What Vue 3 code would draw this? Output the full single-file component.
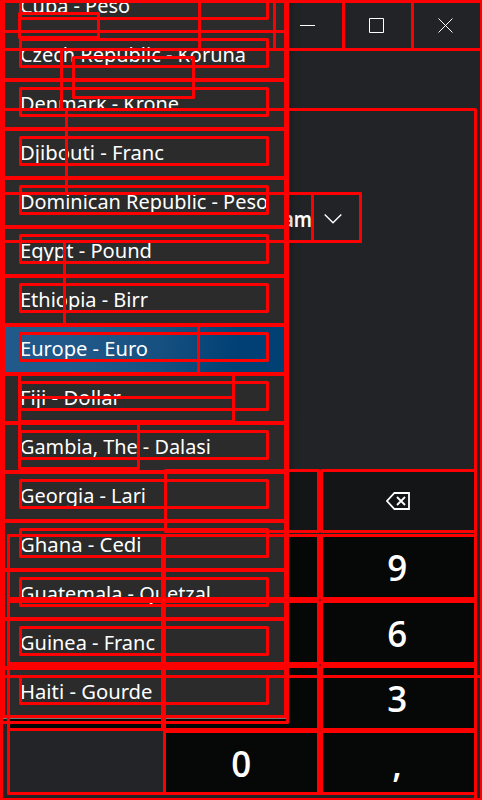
<script setup>
const currencies = [
  { name: 'Cuba - Peso', width: 110 },
  { name: 'Czech Republic - Koruna', width: 226 },
  { name: 'Denmark - Krone', width: 159 },
  { name: 'Djibouti - Franc', width: 144 },
  { name: 'Dominican Republic - Peso', width: 248 },
  { name: 'Egypt - Pound', width: 132 },
  { name: 'Ethiopia - Birr', width: 128 },
  { name: 'Europe - Euro', width: 128, selected: true },
  { name: 'Fiji - Dollar', width: 101 },
  { name: 'Gambia, The - Dalasi', width: 191 },
  { name: 'Georgia - Lari', width: 126 },
  { name: 'Ghana - Cedi', width: 121.5 },
  { name: 'Guatemala - Quetzal', width: 191 },
  { name: 'Guinea - Franc', width: 135 },
  { name: 'Haiti - Gourde', width: 132.5 },
]
const keys = ['', '', '9', '', '', '6', '', '', '3', null, '0', ',']

// Outlined regions as left, top, right, bottom (outer edges)
const regions = [
  [0, 0, 483, 801], [0, 0, 483, 51],
  [198, 0, 276, 51], [273, 0, 345, 51], [342, 0, 414, 51], [411, 0, 483, 51],
  [0, 48, 63, 111], [72, 56, 195, 99], [18, 12, 100, 39],
  [0, 108, 477, 801], [0, 108, 68, 195],
  [0, 192, 362, 243], [311, 192, 362, 243], [0, 240, 66, 327],
  [0, 324, 200, 375], [18, 373, 235, 399], [18, 396, 235, 423], [18, 420, 140, 470],
  [164, 469, 320, 533], [320, 469, 477, 533],
  [7, 534, 477, 795],
  [7, 534, 164, 600], [163, 534, 320, 600], [320, 534, 477, 600],
  [7, 600, 164, 665], [163, 600, 320, 665], [320, 600, 477, 665],
  [7, 665, 164, 731], [163, 665, 320, 731], [320, 665, 477, 731],
  [163, 730, 320, 795], [320, 730, 477, 795],
  [0, 675, 483, 801],
  [0, 0, 289, 718], [0, 0, 289, 724],
  [2, -18, 287, 33],
]
currencies.forEach((_, i) => {
  const top = i * 49 - 19
  if (i > 0) regions.push([2, top, 287, i === 14 ? 718 : top + 51])
  regions.push([19, top + 8, 269, top + 38 + (i === 0 ? 1 : 0)])
})
</script>

<template>
  <main class="window">
    <header class="titlebar">
      <button class="caption"><svg width="16" height="16"><path d="M0 8.5H15" /></svg></button>
      <button class="caption"><svg width="16" height="16"><path d="M.5 1.5H14.5V15.5H.5Z" /></svg></button>
      <button class="caption"><svg width="16" height="16"><path d="M.5 1.5L14.5 15.5M14.5 1.5L.5 15.5" /></svg></button>
    </header>
    <section class="converter">
      <div class="picker">
        <span>Vietnam</span>
        <svg width="18" height="12"><path d="M.7 1.5L9 9.8L17.3 1.5" /></svg>
      </div>
    </section>
    <section class="functions">
      <div class="blank"></div>
      <div class="fn"></div>
      <div class="fn">
        <svg width="24" height="18"><path d="M8.4 1H23V17H8.4L1 9Z" /><path d="M11 5L19 13M19 5L11 13" /></svg>
      </div>
    </section>
    <section class="keypad">
      <div v-for="(key, i) in keys" :key="i" :class="key === null ? 'blank' : 'key'"><span>{{ key }}</span></div>
    </section>

    <ul class="popup">
      <li v-for="c in currencies" :key="c.name" :class="{ selected: c.selected }">
        <svg width="260" height="36"><text x="0" y="24" :textLength="c.width" lengthAdjust="spacingAndGlyphs">{{ c.name }}</text></svg>
      </li>
    </ul>
    <svg class="outlines" width="482" height="800">
      <rect v-for="(r, i) in regions" :key="i" :x="r[0] + 1.5" :y="r[1] + 1.5" :width="r[2] - r[0] - 3" :height="r[3] - r[1] - 3" />
    </svg>
  </main>
</template>

<style>
body { margin: 0; background: #202225; }
</style>

<style scoped>
.window {
  position: relative;
  display: flex;
  flex-direction: column;
  width: 482px;
  height: 800px;
  overflow: hidden;
  background: linear-gradient(180deg, #212326, #222326 50%, #222427);
  font-family: "Noto Sans", "Open Sans", sans-serif;
  color: #fff;
}
svg { fill: none; stroke: #fff; stroke-width: 1; display: block; }
.titlebar { display: flex; justify-content: flex-end; height: 50px; padding-right: 2px; box-sizing: border-box; }
.caption {
  width: 69px;
  height: 50px;
  padding: 0;
  border: 0;
  background: none;
  display: flex;
  align-items: center;
  justify-content: center;
}
.converter { height: 420px; padding-top: 144px; box-sizing: border-box; }
.picker { display: flex; align-items: center; justify-content: flex-end; width: 342px; height: 50px; gap: 12px; font-size: 21px; font-weight: 600; }
.picker span { transform: scaleX(.9); transform-origin: right; }
.picker svg { stroke-width: 1.4; }
.functions, .keypad { display: grid; grid-template-columns: 155px 154px 154px; column-gap: 2px; padding-left: 8px; }
.functions { height: 62px; margin-bottom: 3px; }
.fn { background: #141517; display: flex; align-items: center; justify-content: center; }
.fn svg { stroke-width: 1.8; }
.keypad { grid-template-rows: 64px 64px 63px 63px; row-gap: 2px; }
.key {
  display: flex;
  align-items: center;
  justify-content: center;
  background: #060707;
  font-family: "Open Sans", "Noto Sans", sans-serif;
  font-size: 36px;
  font-weight: 600;
  line-height: 40px;
  padding: 1px 2px 0 0;
  box-sizing: border-box;
}
.key span { transform: scaleX(.97); }
.popup {
  position: absolute;
  left: 2px;
  top: -20px;
  width: 285px;
  height: 738px;
  margin: 0;
  padding: 2px 0 0;
  box-sizing: border-box;
  list-style: none;
  background: #2b2b2b;
  box-shadow: 0 1px 0 #777, 3px 2px 8px rgba(0, 0, 0, .35);
}
.popup li { height: 49px; box-sizing: border-box; padding: 7px 0 0 18px; }
.popup li svg { overflow: visible; }
.popup .selected { background: linear-gradient(100deg, #20598a 25%, #165080 55%, #004075 82%); }
.popup text { fill: #fff; stroke: none; font-size: 20px; }
.outlines { position: absolute; left: 0; top: 0; pointer-events: none; }
.outlines rect { fill: none; stroke: #f00; stroke-width: 3; stroke-linejoin: round; }
</style>
